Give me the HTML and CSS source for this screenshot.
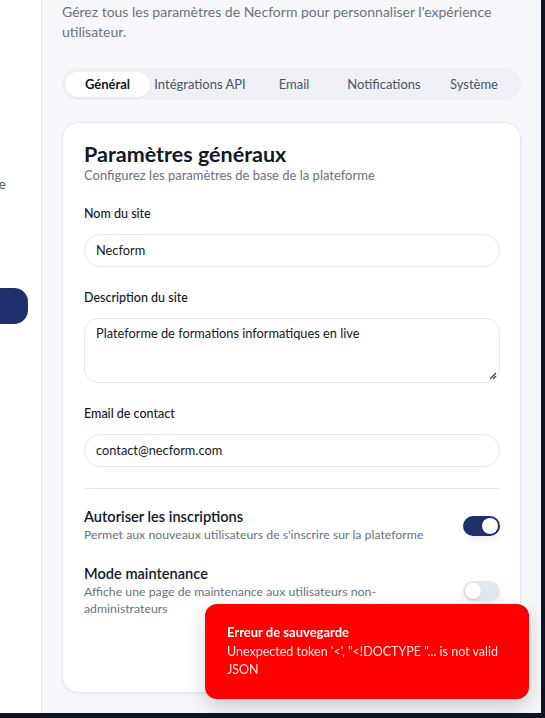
FILE: index.html
```html
<!DOCTYPE html>
<html lang="fr">
<head>
<meta charset="utf-8">
<title>Paramètres</title>
<link rel="stylesheet" href="styles.css">
</head>
<body>
<div class="app">
  <aside class="sidebar">
    <div class="sidebar-inner">
      <div class="nav-item">Vue d'ensemble</div>
      <div class="nav-item active">Paramètres</div>
    </div>
  </aside>
  <main class="main">
    <p class="intro">Gérez tous les paramètres de Necform pour personnaliser l'expérience utilisateur.</p>
    <nav class="tabs">
      <span class="tab active">Général</span>
      <span class="tab">Intégrations API</span>
      <span class="tab">Email</span>
      <span class="tab">Notifications</span>
      <span class="tab">Système</span>
    </nav>
    <section class="card">
      <h2 class="card-title">Paramètres généraux</h2>
      <p class="card-sub">Configurez les paramètres de base de la plateforme</p>
      <div class="field">
        <label class="label">Nom du site</label>
        <div class="input">Necform</div>
      </div>
      <div class="field">
        <label class="label">Description du site</label>
        <div class="textarea">Plateforme de formations informatiques en live
          <svg class="grip" width="10" height="10" viewBox="0 0 10 10"><path d="M9 3 L3 9 M9 6 L6 9" stroke="#444" stroke-width="1.3" fill="none"/></svg>
        </div>
      </div>
      <div class="field">
        <label class="label">Email de contact</label>
        <div class="input">contact@necform.com</div>
      </div>
      <hr class="divider">
      <div class="setting">
        <div class="setting-text">
          <div class="setting-title">Autoriser les inscriptions</div>
          <div class="setting-desc">Permet aux nouveaux utilisateurs de s'inscrire sur la plateforme</div>
        </div>
        <span class="toggle on"><span class="knob"></span></span>
      </div>
      <div class="setting">
        <div class="setting-text narrow">
          <div class="setting-title">Mode maintenance</div>
          <div class="setting-desc">Affiche une page de maintenance aux utilisateurs non-administrateurs</div>
        </div>
        <span class="toggle"><span class="knob"></span></span>
      </div>
    </section>
  </main>
</div>
<div class="toast">
  <div class="toast-title">Erreur de sauvegarde</div>
  <div class="toast-msg">Unexpected token '&lt;', "&lt;!DOCTYPE "... is not valid JSON</div>
</div>
</body>
</html>
```
FILE: styles.css
```css
* { box-sizing: border-box; }
html, body { margin: 0; padding: 0; }
body {
  background: #0f1623;
  font-family: Lato, "Noto Sans", sans-serif;
  width: 545px;
  height: 718px;
  overflow: hidden;
}
.app {
  display: flex;
  width: 541px;
  height: 713px;
  overflow: hidden;
}
.sidebar {
  width: 42px;
  flex: none;
  background: #fff;
  border-right: 1px solid #e6e8ef;
  overflow: hidden;
}
.sidebar-inner {
  width: 240px;
  margin-left: -199px;
  padding-top: 174px;
  display: flex;
  flex-direction: column;
}
.nav-item {
  text-align: right;
  font-size: 14px;
  color: #4a5a7a;
  padding-right: 35px;
  height: 20px;
  line-height: 20px;
}
.nav-item.active {
  margin-top: 94px;
  margin-right: 13px;
  padding-right: 60px;
  height: 36px;
  line-height: 36px;
  background: #1f2f6b;
  color: #fff;
  border-radius: 0 14px 14px 0;
}
.main {
  flex: 1;
  background: #f7f8fb;
  padding: 2px 20px 0 20px;
  overflow: hidden;
}
.intro {
  margin: 0;
  font-size: 14px;
  line-height: 20px;
  color: #6b7280;
}
.tabs {
  margin-top: 26px;
  height: 32px;
  background: #eef0f5;
  border-radius: 16px;
  padding: 4px 3px 3px 3px;
  display: grid;
  grid-template-columns: 85px 100px 88px 92px 1fr;
  align-items: center;
}
.tab {
  font-size: 13px;
  color: #4b5563;
  text-align: center;
  line-height: 25px;
}
.tab.active {
  background: #fff;
  color: #111827;
  border-radius: 13px;
  font-weight: 700;
  box-shadow: 0 1px 2px rgba(0,0,0,0.04);
}
.card {
  margin-top: 22px;
  background: #fff;
  border: 1px solid #e5e8f0;
  border-radius: 16px;
  padding: 18px 20px 0 21px;
  height: 571px;
  box-shadow: 0 1px 3px rgba(15,23,42,0.06);
}
.card-title {
  margin: 0;
  font-size: 21.5px;
  line-height: 26px;
  font-weight: 700;
  color: #111827;
}
.card-sub {
  margin: 0;
  font-size: 13px;
  line-height: 17px;
  color: #6b7280;
}
.field { margin-top: 21px; }
.field + .field { margin-top: 22px; }
.label {
  display: block;
  font-size: 12.5px;
  line-height: 18px;
  font-weight: 500;
  color: #111827;
  margin-bottom: 11px;
}
.input {
  height: 33px;
  border: 1px solid #e3e7ef;
  border-radius: 17px;
  padding: 0 11px;
  font-size: 12.8px;
  line-height: 31px;
  color: #111827;
}
.textarea {
  position: relative;
  height: 65px;
  border: 1px solid #e3e7ef;
  border-radius: 14px;
  padding: 6px 11px;
  font-size: 12.8px;
  line-height: 16px;
  color: #111827;
}
.grip { position: absolute; right: 2px; bottom: 2px; }
.divider {
  border: 0;
  border-top: 1px solid #e5e8f0;
  margin: 21px 0 0 0;
}
.setting {
  display: flex;
  align-items: center;
  justify-content: space-between;
  margin-top: 19px;
}
.setting + .setting { margin-top: 22px; }
.setting-title {
  font-size: 14.6px;
  line-height: 18px;
  font-weight: 600;
  color: #111827;
}
.setting-desc {
  font-size: 12.3px;
  line-height: 17px;
  color: #6b7280;
}
.narrow { width: 320px; }
.toggle {
  flex: none;
  width: 37px;
  height: 20px;
  border-radius: 10px;
  background: #e2e8f0;
  position: relative;
  box-shadow: 0 4px 8px rgba(15,23,42,0.06);
}
.toggle.on { background: #1f2f6b; }
.knob {
  position: absolute;
  top: 2px;
  left: 2px;
  width: 16px;
  height: 16px;
  border-radius: 50%;
  background: #fff;
  box-shadow: 0 1px 2px rgba(0,0,0,0.15);
}
.toggle.on .knob { left: 19px; }
.toast {
  position: fixed;
  right: 16px;
  bottom: 19px;
  width: 324px;
  height: 95px;
  background: #ff0000;
  border-radius: 12px;
  padding: 19px 22px 0 22px;
  color: #fff;
  box-shadow: 0 8px 20px rgba(0,0,0,0.18);
}
.toast-title {
  font-size: 13px;
  line-height: 18px;
  font-weight: 700;
}
.toast-msg {
  margin-top: 2px;
  font-size: 12.5px;
  line-height: 18px;
  color: rgba(255,255,255,0.9);
}
```
